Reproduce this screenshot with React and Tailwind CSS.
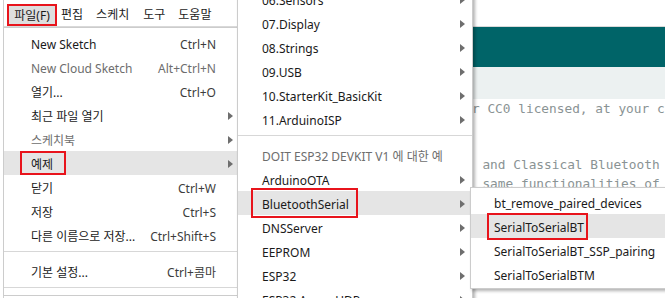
import React from "react";

const UI = "font-['Noto_Sans','Noto_Sans_CJK_KR',sans-serif]";

function Arrow() {
  return (
    <svg width="5" height="8" viewBox="0 0 5 8" className="block">
      <polygon points="0,0 5,4 0,8" fill="#6e6e6e" />
    </svg>
  );
}

function FileRow({ label, shortcut, arrow, disabled, highlight, box }) {
  return (
    <div
      className={`relative flex items-center h-[24px] pt-[3px] pl-[27px] ${highlight ? "bg-[#e5e5e5]" : ""}`}
    >
      {box && (
        <span className="absolute left-[16px] top-0 h-[24px] w-[46px] border-2 border-[#e8141c]" />
      )}
      <span className={`flex-1 whitespace-nowrap ${disabled ? "text-[#6d6d6d]" : "text-[#1a1a1a]"}`}>
        {label}
      </span>
      {shortcut && (
        <span className={`whitespace-nowrap ${disabled ? "text-[#6d6d6d]" : "text-[#3c3c3c]"}`}>
          {shortcut}
        </span>
      )}
      <span className="w-[21px] flex items-center">
        {arrow && (
          <span className="ml-[12px] -mt-[2px]">
            <Arrow />
          </span>
        )}
      </span>
    </div>
  );
}

function Sep() {
  return (
    <div className="h-[12px] pt-[4px]">
      <div className="h-px bg-[#d7d7d7]" />
    </div>
  );
}

function ExRow({ label, arrow = true, disabled, highlight, box }) {
  return (
    <div
      className={`relative flex items-center h-[24px] pt-[3px] pl-[24px] pr-[7px] ${highlight ? "bg-[#e5e5e5]" : ""}`}
    >
      {box && (
        <span className="absolute left-[13px] top-[-3px] h-[30px] w-[107px] border-2 border-[#e8141c]" />
      )}
      <span className={`flex-1 whitespace-nowrap ${disabled ? "text-[#6d6d6d]" : "text-[#1a1a1a]"}`}>
        {label}
      </span>
      {arrow && (
        <span className="-mt-[2px]">
          <Arrow />
        </span>
      )}
    </div>
  );
}

function BtRow({ label, highlight, box }) {
  return (
    <div className={`relative flex items-center h-[24px] pt-[3px] pl-[23px] ${highlight ? "bg-[#e5e5e5]" : ""}`}>
      {box && (
        <span className="absolute left-[16px] top-[-1px] h-[27px] w-[101px] border-2 border-[#e8141c]" />
      )}
      <span className="whitespace-nowrap text-[#1a1a1a]">{label}</span>
    </div>
  );
}

export default function App() {
  return (
    <div className={`relative w-[665px] h-[298px] overflow-hidden bg-white text-[12px] ${UI}`}>
      {/* background window */}
      <div className="flex h-full">
        <div className="w-[3px]" />
        <div className="w-px bg-[#cfcfcf]" />
        <div className="flex-1 flex flex-col overflow-hidden">
          <div className="h-[27px] flex items-center pl-[3px] pt-[4px] border-b border-[#d9d9d9] text-[#1a1a1a]">
            <span className="relative h-[22px] w-[50px] flex items-center justify-center pt-[2px] bg-[#dedede] border-2 border-[#e8141c]">
              파일(F)
            </span>
            <span className="ml-[4px]">편집</span>
            <span className="ml-[13px]">스케치</span>
            <span className="ml-[14px]">도구</span>
            <span className="ml-[13px]">도움말</span>
          </div>
          <div className="h-[40px] bg-[#006468]" />
          <div className="h-[32px] bg-[#ecf1f1]" />
          <div className="flex-1 bg-white pt-[1px] font-['DejaVu_Sans_Mono',monospace] text-[12.8px] leading-[18.7px] text-[#8a9394] pl-[468px] whitespace-pre overflow-hidden">
            <div>r CC0 licensed, at your c</div>
            <div> </div>
            <div> </div>
            <div className="-ml-[5px]">. and Classical Bluetooth</div>
            <div className="-ml-[5px]">. same functionalities of</div>
          </div>
        </div>
      </div>

      {/* File menu */}
      <div className="absolute left-[3px] top-[27px] w-[235px] bg-white border border-[#cccccc] pt-[3px]">
        <FileRow label="New Sketch" shortcut="Ctrl+N" />
        <FileRow label="New Cloud Sketch" shortcut="Alt+Ctrl+N" disabled />
        <FileRow label="열기..." shortcut="Ctrl+O" />
        <FileRow label="최근 파일 열기" arrow />
        <FileRow label="스케치북" arrow disabled />
        <FileRow label="예제" arrow highlight box />
        <FileRow label="닫기" shortcut="Ctrl+W" />
        <FileRow label="저장" shortcut="Ctrl+S" />
        <FileRow label="다른 이름으로 저장..." shortcut="Ctrl+Shift+S" />
        <Sep />
        <FileRow label="기본 설정..." shortcut="Ctrl+콤마" />
        <Sep />
      </div>

      {/* Examples submenu */}
      <div className="absolute left-[237px] top-[-17px] w-[236px] bg-white border border-[#cccccc] pt-[3px] shadow-[2px_2px_3px_rgba(0,0,0,0.3)]">
        <ExRow label="06.Sensors" />
        <ExRow label="07.Display" />
        <ExRow label="08.Strings" />
        <ExRow label="09.USB" />
        <ExRow label="10.StarterKit_BasicKit" />
        <ExRow label="11.ArduinoISP" />
        <Sep />
        <ExRow label="DOIT ESP32 DEVKIT V1 에 대한 예" arrow={false} disabled />
        <ExRow label="ArduinoOTA" />
        <ExRow label="BluetoothSerial" highlight box />
        <ExRow label="DNSServer" />
        <ExRow label="EEPROM" />
        <ExRow label="ESP32" />
        <ExRow label="ESP32 Async UDP" />
      </div>

      {/* BluetoothSerial submenu */}
      <div className="absolute left-[470px] top-[187px] w-[210px] bg-white border border-[#cccccc] pt-[2px] pb-[2px] shadow-[2px_2px_3px_rgba(0,0,0,0.3)]">
        <BtRow label="bt_remove_paired_devices" />
        <BtRow label="SerialToSerialBT" highlight box />
        <BtRow label="SerialToSerialBT_SSP_pairing" />
        <BtRow label="SerialToSerialBTM" />
      </div>
    </div>
  );
}
